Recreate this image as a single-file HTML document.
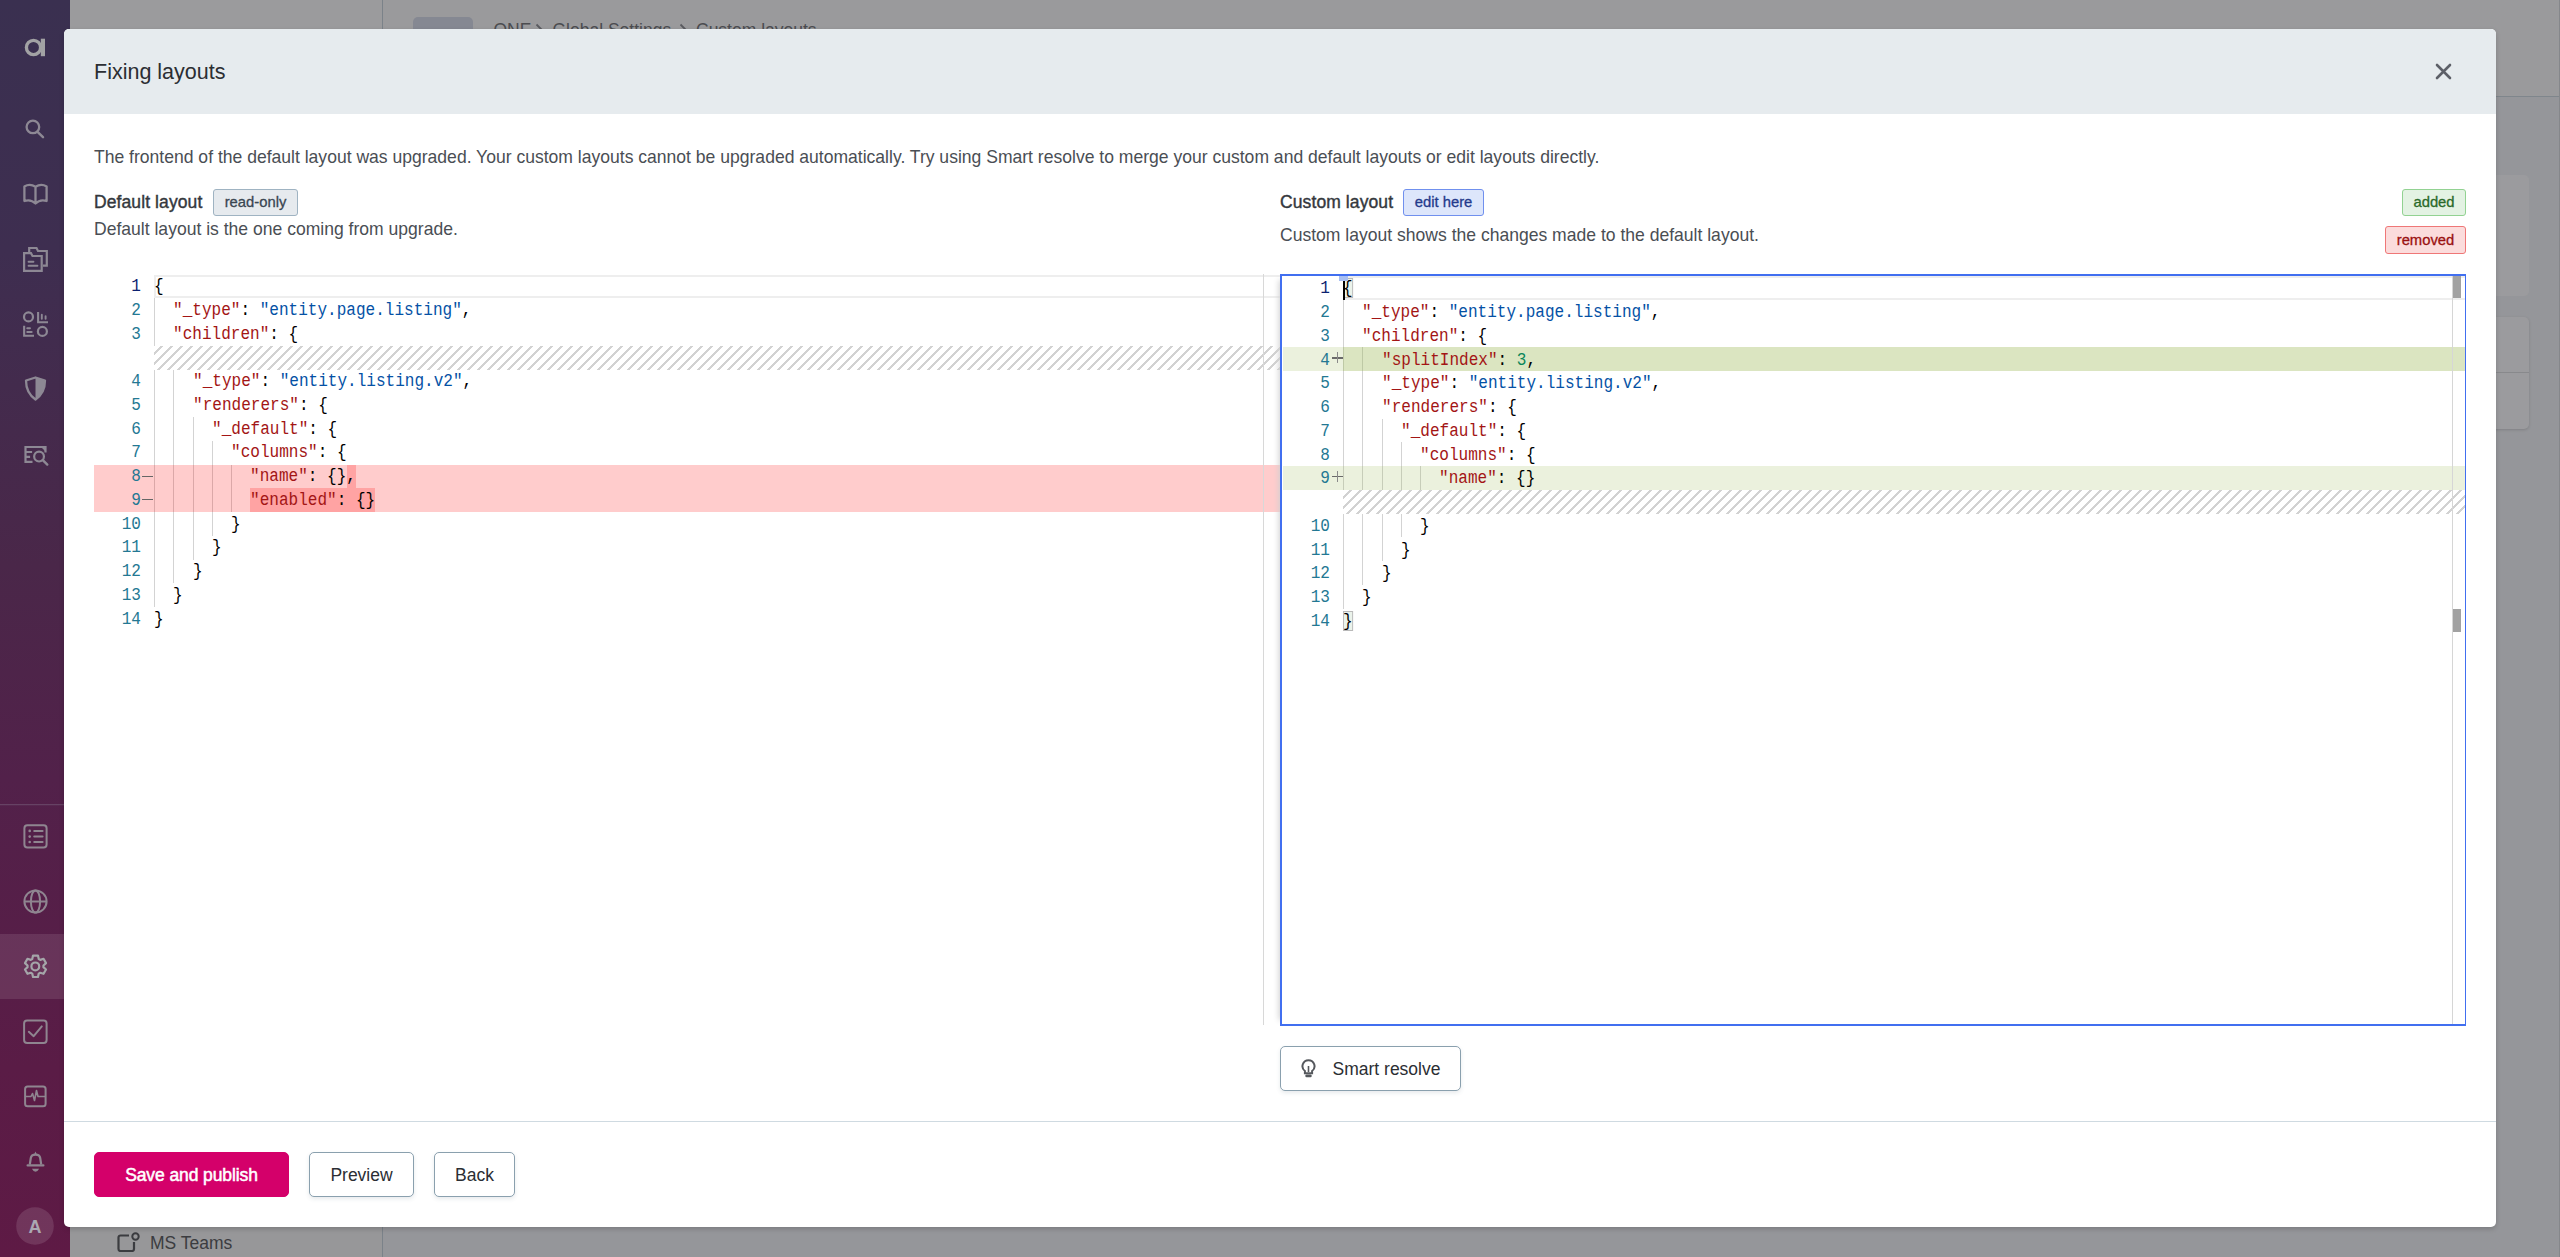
<!DOCTYPE html>
<html><head><meta charset="utf-8">
<style>
*{box-sizing:border-box;margin:0;padding:0}
html,body{width:2560px;height:1257px;overflow:hidden;background:#95969a;font-family:"Liberation Sans",sans-serif;position:relative}
.abs{position:absolute}
.bc{top:19px;font-size:17.5px;color:#4b4c50;white-space:nowrap;line-height:22px}
/* background page */
#bgtop{left:70px;top:0;width:2490px;height:97px;background:#9a9a9c;border-bottom:1px solid #7f868c}
#bgleft{left:70px;top:0;width:313px;height:1257px;background:#979799;border-right:1px solid #838488}
#sidebar{left:0;top:0;width:70px;height:1257px;background:linear-gradient(180deg,#3a3050 0%,#3e2e50 20%,#4a2749 45%,#52214a 62%,#5a1c46 85%,#5e1a45 100%)}
.sic{position:absolute;left:0;width:70px;display:flex;align-items:center;justify-content:center}
.sic svg{display:block}
/* modal */
#modal{left:64px;top:29px;width:2432px;height:1198px;background:#fff;border-radius:5px;overflow:hidden;box-shadow:0 2px 5px rgba(0,0,0,0.18)}
#mhead{left:0;top:0;width:2432px;height:85px;background:#e6ebee}
#title{left:30px;top:30px;font-size:21.5px;color:#2b2e33;line-height:26px;white-space:nowrap}
.t{position:absolute;white-space:nowrap;line-height:22px}
.desc{font-size:17.56px;color:#4a4e54}
.lbl{font-size:17.5px;color:#34383d;-webkit-text-stroke:0.4px #34383d;letter-spacing:0.1px}
.badge{position:absolute;font-size:14.8px;-webkit-text-stroke:0.3px currentColor;line-height:24px;border:1px solid;border-radius:3px;text-align:center;white-space:nowrap}
.btn{position:absolute;height:45px;border-radius:5px;font-size:17.5px;line-height:45px;text-align:center;white-space:nowrap;color:#2b2e33;border:1px solid #8aa0ae;background:#fff;box-shadow:0 2px 4px rgba(60,80,100,0.12)}
/* editor */
.ed{position:absolute}
.ln{position:absolute;font-family:"Liberation Mono",monospace;font-size:17.5px;line-height:23.75px;text-align:right;color:#237893;padding-top:0.5px;transform:scaleX(0.9166);transform-origin:100% 0}
.ln.act{color:#0b216f}
.code{position:absolute;font-family:"Liberation Mono",monospace;font-size:17.5px;line-height:23.75px;white-space:pre;color:#000;transform:scaleX(0.9166);transform-origin:0 0;padding-top:0.5px}
.k{color:#a31515}.s{color:#0451a5}.n{color:#098658}.p{color:#000}
.hlr{background:#ff9f9f}
.rbg{position:absolute;background:rgba(255,0,0,0.2)}
.gbg{position:absolute;background:rgba(155,185,85,0.2)}
.gbg2{position:absolute;background:#dce6c4}
.hatch{position:absolute;background-image:linear-gradient(-45deg,#d2d2d2 17%,transparent 17%,transparent 50%,#d2d2d2 50%,#d2d2d2 67%,transparent 67%,transparent 100%);background-size:10px 10px}
.cur{position:absolute;border:2px solid #eeeeee;border-right:none}
.guide{position:absolute;width:1px;background:#d3d3d3}
.mk{position:absolute;width:12px;height:23.75px}
.mk.minus:before{content:"";position:absolute;left:0;top:11px;width:11px;height:1px;background:#666}
.mk.plus{width:12px;height:23.75px}
.mk.plus:before{content:"";position:absolute;left:0.5px;top:10px;width:11px;height:1.3px;background:#6a6a6a}
.mk.plus:after{content:"";position:absolute;left:5.5px;top:5px;width:1.3px;height:11px;background:#8a8a8a}
.bm{background:rgba(0,100,0,0.08);outline:1px solid #b9b9b9;outline-offset:-1px}
</style></head>
<body>
<div id="bgleft" class="abs"></div>
<div id="bgtop" class="abs" style="left:383px;width:2177px"></div>
<div class="abs" style="left:70px;top:0;width:313px;height:29px;background:#9b9b9d"></div>
<!-- breadcrumb -->
<div class="abs" style="left:413px;top:17px;width:60px;height:30px;background:#858892;border-radius:5px"></div>
<div class="abs bc" style="left:493.5px">ONE</div><svg class="abs" style="left:535px;top:23px" width="8" height="12" viewBox="0 0 8 12"><path d="M1.5 1.5l5 5l-5 5" fill="none" stroke="#5a5b60" stroke-width="1.8"/></svg><div class="abs bc" style="left:552.5px">Global Settings</div><svg class="abs" style="left:678.5px;top:23px" width="8" height="12" viewBox="0 0 8 12"><path d="M1.5 1.5l5 5l-5 5" fill="none" stroke="#5a5b60" stroke-width="1.8"/></svg><div class="abs bc" style="left:696px">Custom layouts</div>
<div class="abs" style="left:382px;top:0;width:1px;height:1257px;background:#7b8289"></div>
<!-- right bg cards -->
<div class="abs" style="left:2400px;top:175px;width:129px;height:121px;background:#9b9b9e;border-radius:5px"></div>
<div class="abs" style="left:2400px;top:317px;width:129px;height:112px;background:#9b9b9e;border-radius:5px;box-shadow:0 1px 3px rgba(0,0,0,0.15)"></div>
<div class="abs" style="left:2400px;top:372px;width:129px;height:1px;background:#88898c"></div>
<div class="abs" style="left:2559px;top:0;width:1px;height:1257px;background:#85878b"></div>
<!-- MS Teams -->
<div class="abs" style="left:117px;top:1232px;width:23px;height:20px">
<svg width="23" height="20" viewBox="0 0 23 20"><path d="M12 3.5H3.5a2 2 0 0 0-2 2V17a2 2 0 0 0 2 2H15a2 2 0 0 0 2-2V10" fill="none" stroke="#3b3c40" stroke-width="2.2"/><circle cx="18.5" cy="4.5" r="3.2" fill="none" stroke="#3b3c40" stroke-width="2"/></svg>
</div>
<div class="abs" style="left:150px;top:1233px;font-size:17.5px;color:#3b3c40;white-space:nowrap;line-height:20px">MS Teams</div>

<!-- sidebar -->
<div id="sidebar" class="abs">
<svg class="abs" style="left:0;top:0" width="70" height="1257" viewBox="0 0 70 1257">
<g fill="none" stroke-linecap="butt">
<circle cx="33.5" cy="47.45" r="7.1" stroke="#a2a2a4" stroke-width="3.35"/>
<rect x="40.8" y="38.7" width="4.2" height="17.5" fill="#a2a2a4" stroke="none"/>
<circle cx="32.9" cy="126.9" r="6.3" stroke="#8d8894" stroke-width="2.3"/>
<path d="M37.8 132.2L43 137.2" stroke="#8d8894" stroke-width="2.5" stroke-linecap="round"/>
<path d="M24.4 201V186.5C27.5 184.5 32 184.5 35.5 186.8C39 184.5 43.5 184.5 46.6 186.5V201C43 199.8 39 200 35.5 203.5C32 200 28 199.8 24.4 201Z M35.5 186.8V203" stroke="#8d8894" stroke-width="2.3" stroke-linejoin="round"/>
<path d="M29.2 252.5V248H36.5L38 251H46.8V265.7H43" stroke="#8d8894" stroke-width="2.2"/>
<path d="M24.1 253.2H31L32.5 256H41.7V270.9H24.1Z" stroke="#8d8894" stroke-width="2.2"/>
<path d="M28.6 261.8H33.4M28.6 265.7H37.4" stroke="#8d8894" stroke-width="2" stroke-linecap="round"/>
<circle cx="28.5" cy="316.9" r="4.5" stroke="#8d8894" stroke-width="2.2"/>
<circle cx="42.4" cy="331.4" r="4.5" stroke="#8d8894" stroke-width="2.2"/>
<path d="M38.1 312V322.2H48M24.15 325.8V335.8H34" stroke="#8d8894" stroke-width="2.1"/>
<path d="M41.8 314.8V318.8M45.6 316.2V318.8M27.2 328.2H30M27.2 332H31.7" stroke="#8d8894" stroke-width="1.9" stroke-linecap="round"/>
<path d="M35.5 377.5L26 380.5C26 389 29 395 35.5 399.5C42 395 45 389 45 380.5Z" stroke="#8d8894" stroke-width="2.3" stroke-linejoin="round"/>
<path d="M35.5 377.5L45 380.5C45 389 42 395 35.5 399.5Z" fill="#8d8894" stroke="none"/>
<path d="M25.5 463V447H45.5V452.5M25.5 452H32.1M25.5 456.8H30.1M24.5 461.8H32.5" stroke="#8d8894" stroke-width="2.2"/>
<circle cx="39.05" cy="456.6" r="4.9" stroke="#8d8894" stroke-width="2.2"/>
<path d="M42.8 460.2L47.3 464.6" stroke="#8d8894" stroke-width="2.4" stroke-linecap="round"/>
<path d="M45 447.5L45.5 451.5L41.5 447.5Z" fill="#8d8894" stroke="none"/>
</g>
<rect x="0" y="804.2" width="70" height="1" fill="#6b4b6c"/>
<g fill="none" stroke="#8f8590">
<rect x="24.4" y="825.2" width="22.2" height="22.3" rx="3" stroke-width="2"/>
<circle cx="29.7" cy="830.9" r="1.3" fill="#8f8590" stroke="none"/><circle cx="29.7" cy="836.6" r="1.3" fill="#8f8590" stroke="none"/><circle cx="29.7" cy="842" r="1.3" fill="#8f8590" stroke="none"/>
<path d="M34.2 830.9H42.6M34.2 836.6H42.6M34.2 842H42.6" stroke-width="2" stroke-linecap="round"/>
<circle cx="35.5" cy="901.5" r="11.1" stroke-width="2"/>
<ellipse cx="35.5" cy="901.5" rx="4.6" ry="11.1" stroke-width="2"/>
<path d="M24.4 901.5H46.6" stroke-width="2"/>
</g>
<rect x="0" y="934" width="70" height="65" fill="rgba(255,255,255,0.1)"/>
<g fill="none">
<path d="M32.25 958.99 L33.03 955.58 L37.97 955.58 L38.75 958.99 L40.20 959.83 L43.54 958.80 L46.02 963.08 L43.46 965.46 L43.46 967.14 L46.02 969.52 L43.54 973.80 L40.20 972.77 L38.75 973.61 L37.97 977.02 L33.03 977.02 L32.25 973.61 L30.80 972.77 L27.46 973.80 L24.98 969.52 L27.54 967.14 L27.54 965.46 L24.98 963.08 L27.46 958.80 L30.80 959.83 Z" stroke="#a4a6a9" stroke-width="2.2" stroke-linejoin="round"/>
<circle cx="35.3" cy="966.4" r="3.9" stroke="#a4a6a9" stroke-width="2.2"/>
</g>
<g fill="none" stroke="#8f8590">
<rect x="24.1" y="1020.4" width="22.5" height="22.6" rx="3" stroke-width="2"/>
<path d="M28.8 1031.8L33.7 1036.2L41.8 1026.4" stroke-width="2" stroke-linecap="round" stroke-linejoin="round"/>
<rect x="25.1" y="1086.5" width="20.5" height="19.8" rx="2.5" stroke-width="2"/>
<path d="M25.5 1096.5H31L32.5 1093.5L34.5 1100.5L36.5 1090.5L38 1096.5H45.5" stroke-width="1.6" stroke-linejoin="round"/>
</g>
<g fill="#8f8590" stroke="none">
<path d="M29.8 1164.5L30.8 1158C31.2 1155.4 33 1154.6 35.5 1154.6C38 1154.6 39.8 1155.4 40.2 1158L41.2 1164.5" fill="none" stroke="#8f8590" stroke-width="2.2"/>
<path d="M27.6 1165.4H43.4" stroke="#8f8590" stroke-width="2.2" stroke-linecap="round" fill="none"/>
<path d="M34.3 1154L35.5 1151.4L36.7 1154Z"/>
<path d="M31.9 1168.8H39.1Q37.6 1171.8 35.5 1171.8Q33.4 1171.8 31.9 1168.8Z"/>
</g>
<circle cx="35" cy="1226" r="18.8" fill="rgba(255,255,255,0.12)"/>
</svg>
<div class="abs" style="left:16px;top:1207px;width:38px;height:38px;color:#aba8b2;font-size:18px;font-weight:bold;text-align:center;line-height:40px">A</div>
</div>

<!-- modal -->
<div id="modal" class="abs">
  <div id="mhead" class="abs"></div>
  <div id="title" class="abs">Fixing layouts</div>
  <svg class="abs" style="left:2371px;top:34px" width="17" height="17" viewBox="0 0 17 17"><path d="M2 2l13 13M15 2l-13 13" stroke="#5d6068" stroke-width="2.6" stroke-linecap="round"/></svg>
</div>
<div class="t desc" style="left:94px;top:146px">The frontend of the default layout was upgraded. Your custom layouts cannot be upgraded automatically. Try using Smart resolve to merge your custom and default layouts or edit layouts directly.</div>
<div class="t lbl" style="left:94px;top:191px">Default layout</div>
<div class="badge" style="left:213px;top:189px;width:85px;height:27px;background:#e6eaee;border-color:#9fb3c2;color:#3a4652">read-only</div>
<div class="t desc" style="left:94px;top:218px">Default layout is the one coming from upgrade.</div>
<div class="t lbl" style="left:1280px;top:191px">Custom layout</div>
<div class="badge" style="left:1403px;top:189px;width:81px;height:27px;background:#dde6fb;border-color:#7090ee;color:#243a8c">edit here</div>
<div class="t desc" style="left:1280px;top:224px">Custom layout shows the changes made to the default layout.</div>
<div class="badge" style="left:2402px;top:189px;width:64px;height:27px;background:#e3f2e3;border-color:#92d292;color:#2a6a2a">added</div>
<div class="badge" style="left:2385px;top:226px;width:81px;height:28px;line-height:26px;background:#fbdcdc;border-color:#ef7777;color:#9a1111">removed</div>

<!-- left editor -->
<div class="abs" style="left:94px;top:274px;width:1186px;height:751px;background:#fff;overflow:hidden">
</div>
<div class="cur" style="left:154px;top:274.5px;width:1126px;height:23.75px"></div>
<div class="hatch" style="left:154px;top:345.75px;width:1126px;height:23.75px"></div>
<div class="guide" style="left:154.0px;top:298.25px;height:23.75px"></div>
<div class="guide" style="left:154.0px;top:322.0px;height:23.75px"></div>
<div class="guide" style="left:154.0px;top:369.5px;height:23.75px"></div>
<div class="guide" style="left:173.25px;top:369.5px;height:23.75px"></div>
<div class="guide" style="left:154.0px;top:393.25px;height:23.75px"></div>
<div class="guide" style="left:173.25px;top:393.25px;height:23.75px"></div>
<div class="guide" style="left:154.0px;top:417.0px;height:23.75px"></div>
<div class="guide" style="left:173.25px;top:417.0px;height:23.75px"></div>
<div class="guide" style="left:192.5px;top:417.0px;height:23.75px"></div>
<div class="guide" style="left:154.0px;top:440.75px;height:23.75px"></div>
<div class="guide" style="left:173.25px;top:440.75px;height:23.75px"></div>
<div class="guide" style="left:192.5px;top:440.75px;height:23.75px"></div>
<div class="guide" style="left:211.75px;top:440.75px;height:23.75px"></div>
<div class="guide" style="left:154.0px;top:464.5px;height:23.75px"></div>
<div class="guide" style="left:173.25px;top:464.5px;height:23.75px"></div>
<div class="guide" style="left:192.5px;top:464.5px;height:23.75px"></div>
<div class="guide" style="left:211.75px;top:464.5px;height:23.75px"></div>
<div class="guide" style="left:231.0px;top:464.5px;height:23.75px"></div>
<div class="guide" style="left:154.0px;top:488.25px;height:23.75px"></div>
<div class="guide" style="left:173.25px;top:488.25px;height:23.75px"></div>
<div class="guide" style="left:192.5px;top:488.25px;height:23.75px"></div>
<div class="guide" style="left:211.75px;top:488.25px;height:23.75px"></div>
<div class="guide" style="left:231.0px;top:488.25px;height:23.75px"></div>
<div class="guide" style="left:154.0px;top:512.0px;height:23.75px"></div>
<div class="guide" style="left:173.25px;top:512.0px;height:23.75px"></div>
<div class="guide" style="left:192.5px;top:512.0px;height:23.75px"></div>
<div class="guide" style="left:211.75px;top:512.0px;height:23.75px"></div>
<div class="guide" style="left:154.0px;top:535.75px;height:23.75px"></div>
<div class="guide" style="left:173.25px;top:535.75px;height:23.75px"></div>
<div class="guide" style="left:192.5px;top:535.75px;height:23.75px"></div>
<div class="guide" style="left:154.0px;top:559.5px;height:23.75px"></div>
<div class="guide" style="left:173.25px;top:559.5px;height:23.75px"></div>
<div class="guide" style="left:154.0px;top:583.25px;height:23.75px"></div>
<div class="ln act" style="left:94px;width:47px;top:274.5px">1</div>
<div class="code" style="left:154.0px;top:274.5px"><span class="p">{</span></div>
<div class="ln" style="left:94px;width:47px;top:298.25px">2</div>
<div class="code" style="left:173.25px;top:298.25px"><span class="k">"_type"</span><span class="p">: </span><span class="s">"entity.page.listing"</span><span class="p">,</span></div>
<div class="ln" style="left:94px;width:47px;top:322.0px">3</div>
<div class="code" style="left:173.25px;top:322.0px"><span class="k">"children"</span><span class="p">: {</span></div>
<div class="ln" style="left:94px;width:47px;top:369.5px">4</div>
<div class="code" style="left:192.5px;top:369.5px"><span class="k">"_type"</span><span class="p">: </span><span class="s">"entity.listing.v2"</span><span class="p">,</span></div>
<div class="ln" style="left:94px;width:47px;top:393.25px">5</div>
<div class="code" style="left:192.5px;top:393.25px"><span class="k">"renderers"</span><span class="p">: {</span></div>
<div class="ln" style="left:94px;width:47px;top:417.0px">6</div>
<div class="code" style="left:211.75px;top:417.0px"><span class="k">"_default"</span><span class="p">: {</span></div>
<div class="ln" style="left:94px;width:47px;top:440.75px">7</div>
<div class="code" style="left:231.0px;top:440.75px"><span class="k">"columns"</span><span class="p">: {</span></div>
<div class="rbg" style="left:94px;top:464.5px;width:1186px;height:23.75px"></div>
<div class="rbg" style="left:346.5px;top:464.5px;width:9.625px;height:23.75px"></div>
<div class="ln" style="left:94px;width:47px;top:464.5px">8</div>
<div class="mk minus" style="left:142px;top:464.5px"></div>
<div class="code" style="left:250.25px;top:464.5px"><span class="k">"name"</span><span class="p">: {}</span><span class="p">,</span></div>
<div class="rbg" style="left:94px;top:488.25px;width:1186px;height:23.75px"></div>
<div class="rbg" style="left:250.25px;top:488.25px;width:125.125px;height:23.75px"></div>
<div class="ln" style="left:94px;width:47px;top:488.25px">9</div>
<div class="mk minus" style="left:142px;top:488.25px"></div>
<div class="code" style="left:250.25px;top:488.25px"><span class="k">"enabled"</span><span class="p">: {}</span></div>
<div class="ln" style="left:94px;width:47px;top:512.0px">10</div>
<div class="code" style="left:231.0px;top:512.0px"><span class="p">}</span></div>
<div class="ln" style="left:94px;width:47px;top:535.75px">11</div>
<div class="code" style="left:211.75px;top:535.75px"><span class="p">}</span></div>
<div class="ln" style="left:94px;width:47px;top:559.5px">12</div>
<div class="code" style="left:192.5px;top:559.5px"><span class="p">}</span></div>
<div class="ln" style="left:94px;width:47px;top:583.25px">13</div>
<div class="code" style="left:173.25px;top:583.25px"><span class="p">}</span></div>
<div class="ln" style="left:94px;width:47px;top:607.0px">14</div>
<div class="code" style="left:154.0px;top:607.0px"><span class="p">}</span></div>
<div class="abs" style="left:1263px;top:274px;width:1px;height:751px;background:#d8d8d8"></div>

<!-- right editor -->
<div class="abs" style="left:1280px;top:274px;width:1186px;height:752px;border:2px solid #416ff0;border-right:1.5px solid #416ff0;background:#fff;box-shadow:-7px 0 6px -6px #d0d0d0"></div>
<div class="cur" style="left:1343px;top:276.0px;width:1122px;height:23.75px"></div>
<div class="hatch" style="left:1343px;top:489.75px;width:1122px;height:23.75px"></div>
<div class="guide" style="left:1343.0px;top:299.75px;height:23.75px"></div>
<div class="guide" style="left:1343.0px;top:323.5px;height:23.75px"></div>
<div class="guide" style="left:1343.0px;top:347.25px;height:23.75px"></div>
<div class="guide" style="left:1362.25px;top:347.25px;height:23.75px"></div>
<div class="guide" style="left:1343.0px;top:371.0px;height:23.75px"></div>
<div class="guide" style="left:1362.25px;top:371.0px;height:23.75px"></div>
<div class="guide" style="left:1343.0px;top:394.75px;height:23.75px"></div>
<div class="guide" style="left:1362.25px;top:394.75px;height:23.75px"></div>
<div class="guide" style="left:1343.0px;top:418.5px;height:23.75px"></div>
<div class="guide" style="left:1362.25px;top:418.5px;height:23.75px"></div>
<div class="guide" style="left:1381.5px;top:418.5px;height:23.75px"></div>
<div class="guide" style="left:1343.0px;top:442.25px;height:23.75px"></div>
<div class="guide" style="left:1362.25px;top:442.25px;height:23.75px"></div>
<div class="guide" style="left:1381.5px;top:442.25px;height:23.75px"></div>
<div class="guide" style="left:1400.75px;top:442.25px;height:23.75px"></div>
<div class="guide" style="left:1343.0px;top:466.0px;height:23.75px"></div>
<div class="guide" style="left:1362.25px;top:466.0px;height:23.75px"></div>
<div class="guide" style="left:1381.5px;top:466.0px;height:23.75px"></div>
<div class="guide" style="left:1400.75px;top:466.0px;height:23.75px"></div>
<div class="guide" style="left:1420.0px;top:466.0px;height:23.75px"></div>
<div class="guide" style="left:1343.0px;top:513.5px;height:23.75px"></div>
<div class="guide" style="left:1362.25px;top:513.5px;height:23.75px"></div>
<div class="guide" style="left:1381.5px;top:513.5px;height:23.75px"></div>
<div class="guide" style="left:1400.75px;top:513.5px;height:23.75px"></div>
<div class="guide" style="left:1343.0px;top:537.25px;height:23.75px"></div>
<div class="guide" style="left:1362.25px;top:537.25px;height:23.75px"></div>
<div class="guide" style="left:1381.5px;top:537.25px;height:23.75px"></div>
<div class="guide" style="left:1343.0px;top:561.0px;height:23.75px"></div>
<div class="guide" style="left:1362.25px;top:561.0px;height:23.75px"></div>
<div class="guide" style="left:1343.0px;top:584.75px;height:23.75px"></div>
<div class="ln act" style="left:1283px;width:47px;top:276.75px">1</div>
<div class="code" style="left:1343.0px;top:276.75px"><span class="bm"><span class="p">{</span></span></div>
<div class="ln" style="left:1283px;width:47px;top:300.5px">2</div>
<div class="code" style="left:1362.25px;top:300.5px"><span class="k">"_type"</span><span class="p">: </span><span class="s">"entity.page.listing"</span><span class="p">,</span></div>
<div class="ln" style="left:1283px;width:47px;top:324.25px">3</div>
<div class="code" style="left:1362.25px;top:324.25px"><span class="k">"children"</span><span class="p">: {</span></div>
<div class="gbg" style="left:1283px;top:347.25px;width:1182px;height:23.75px"></div>
<div class="gbg" style="left:1343px;top:347.25px;width:1122px;height:23.75px"></div>
<div class="ln" style="left:1283px;width:47px;top:348.0px">4</div>
<div class="mk plus" style="left:1331px;top:347.25px"></div>
<div class="code" style="left:1381.5px;top:348.0px"><span class="k">"splitIndex"</span><span class="p">: </span><span class="n">3</span><span class="p">,</span></div>
<div class="ln" style="left:1283px;width:47px;top:371.75px">5</div>
<div class="code" style="left:1381.5px;top:371.75px"><span class="k">"_type"</span><span class="p">: </span><span class="s">"entity.listing.v2"</span><span class="p">,</span></div>
<div class="ln" style="left:1283px;width:47px;top:395.5px">6</div>
<div class="code" style="left:1381.5px;top:395.5px"><span class="k">"renderers"</span><span class="p">: {</span></div>
<div class="ln" style="left:1283px;width:47px;top:419.25px">7</div>
<div class="code" style="left:1400.75px;top:419.25px"><span class="k">"_default"</span><span class="p">: {</span></div>
<div class="ln" style="left:1283px;width:47px;top:443.0px">8</div>
<div class="code" style="left:1420.0px;top:443.0px"><span class="k">"columns"</span><span class="p">: {</span></div>
<div class="gbg" style="left:1283px;top:466.0px;width:1182px;height:23.75px"></div>
<div class="ln" style="left:1283px;width:47px;top:466.75px">9</div>
<div class="mk plus" style="left:1331px;top:466.0px"></div>
<div class="code" style="left:1439.25px;top:466.75px"><span class="k">"name"</span><span class="p">: {}</span></div>
<div class="ln" style="left:1283px;width:47px;top:514.25px">10</div>
<div class="code" style="left:1420.0px;top:514.25px"><span class="p">}</span></div>
<div class="ln" style="left:1283px;width:47px;top:538.0px">11</div>
<div class="code" style="left:1400.75px;top:538.0px"><span class="p">}</span></div>
<div class="ln" style="left:1283px;width:47px;top:561.75px">12</div>
<div class="code" style="left:1381.5px;top:561.75px"><span class="p">}</span></div>
<div class="ln" style="left:1283px;width:47px;top:585.5px">13</div>
<div class="code" style="left:1362.25px;top:585.5px"><span class="p">}</span></div>
<div class="ln" style="left:1283px;width:47px;top:609.25px">14</div>
<div class="code" style="left:1343.0px;top:609.25px"><span class="bm"><span class="p">}</span></span></div>
<div class="abs" style="left:2452px;top:276px;width:1px;height:748px;background:#d6d6d6"></div>
<div class="abs" style="left:2453px;top:276px;width:8px;height:22px;background:#a2a2a2"></div>
<div class="abs" style="left:2453px;top:609px;width:8px;height:23px;background:#a2a2a2"></div>
<div class="abs" style="left:1343px;top:281px;width:2px;height:19px;background:#000"></div>
<div class="abs" style="left:1339px;top:276px;width:9px;height:5px;background:#a8bff2"></div>

<!-- smart resolve -->
<div class="btn" style="left:1280px;top:1046px;width:181px;padding-left:32px">Smart resolve</div>
<svg class="abs" style="left:1301px;top:1059px" width="15" height="19" viewBox="0 0 15 19"><path d="M7.5 1.2a6 6 0 0 0-3.6 10.8v2.3h7.2v-2.3A6 6 0 0 0 7.5 1.2z" fill="none" stroke="#55585d" stroke-width="2"/><path d="M7.5 7v6" stroke="#55585d" stroke-width="1.6"/><rect x="4.3" y="15.5" width="6.4" height="2.8" rx="1.2" fill="#55585d"/></svg>

<!-- footer -->
<div class="abs" style="left:64px;top:1121px;width:2432px;height:1px;background:#cfdae1"></div>
<div class="btn" style="left:94px;top:1152px;width:195px;background:#d4006a;border-color:#d4006a;color:#fff;-webkit-text-stroke:0.5px #fff;letter-spacing:-0.1px;box-shadow:none">Save and publish</div>
<div class="btn" style="left:309px;top:1152px;width:105px">Preview</div>
<div class="btn" style="left:434px;top:1152px;width:81px">Back</div>
</body></html>
